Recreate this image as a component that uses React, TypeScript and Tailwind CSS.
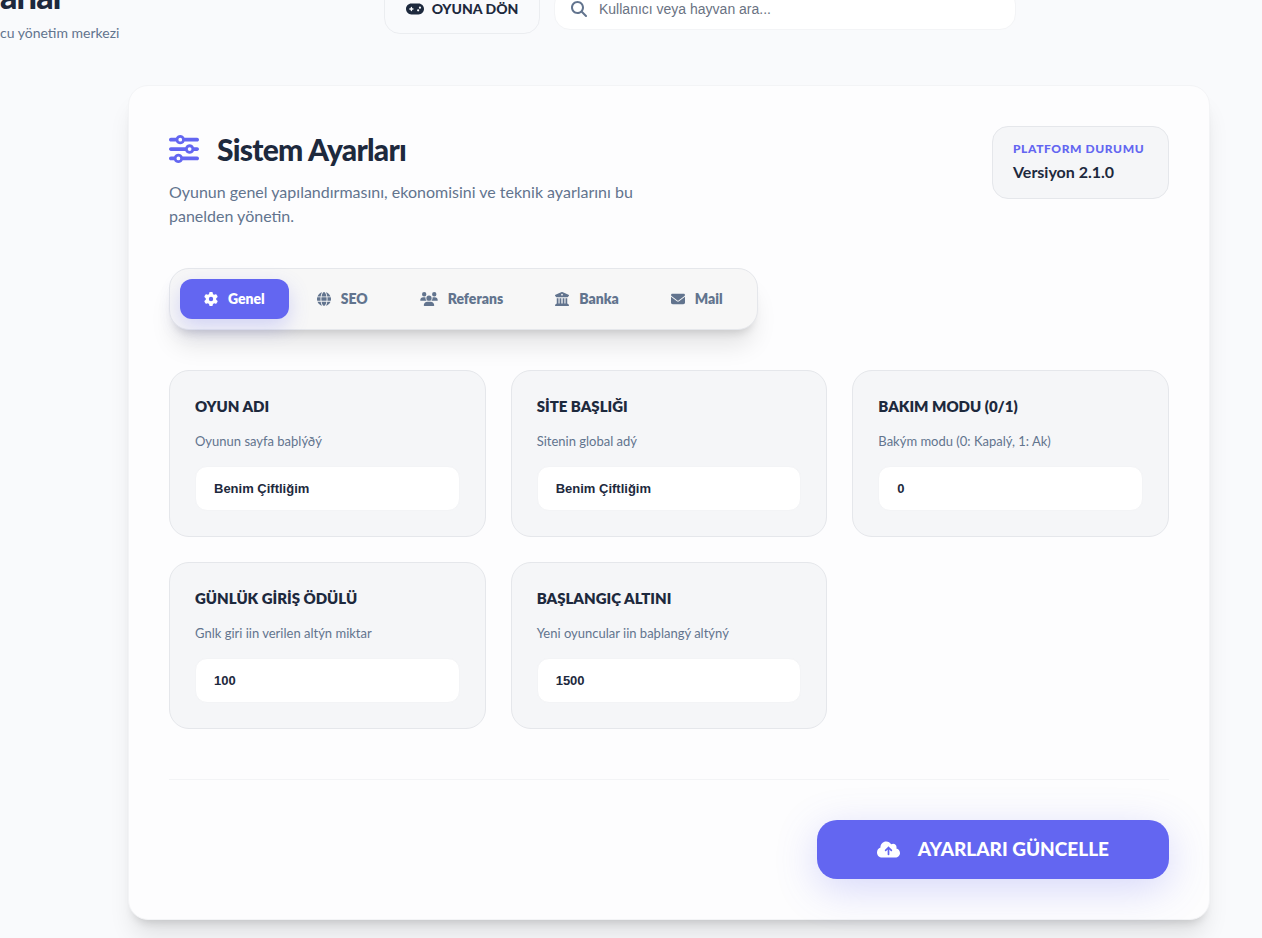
import { useState } from "react";
import type { FormEvent } from "react";
import {
  FaBuildingColumns,
  FaCloudArrowUp,
  FaEnvelope,
  FaGamepad,
  FaGear,
  FaGlobe,
  FaMagnifyingGlass,
  FaSliders,
  FaUsers,
} from "react-icons/fa6";

const tabs = [
  { id: "genel", label: "Genel", icon: FaGear, iconClass: "h-3.5 w-3.5" },
  { id: "seo", label: "SEO", icon: FaGlobe, iconClass: "h-3.5 w-3.5" },
  { id: "referans", label: "Referans", icon: FaUsers, iconClass: "h-3.5 w-[18px]" },
  { id: "banka", label: "Banka", icon: FaBuildingColumns, iconClass: "h-3.5 w-3.5" },
  { id: "mail", label: "Mail", icon: FaEnvelope, iconClass: "h-3.5 w-3.5" },
];

const settings = [
  { id: "game_name", label: "OYUN ADI", help: "Oyunun sayfa baþlýðý", value: "Benim Çiftliğim" },
  { id: "site_title", label: "SİTE BAŞLIĞI", help: "Sitenin global adý", value: "Benim Çiftliğim" },
  { id: "maintenance", label: "BAKIM MODU (0/1)", help: "Bakým modu (0: Kapalý, 1: Ak)", value: "0" },
  { id: "daily_reward", label: "GÜNLÜK GİRİŞ ÖDÜLÜ", help: "Gnlk giri iin verilen altýn miktar", value: "100" },
  { id: "start_gold", label: "BAŞLANGIÇ ALTINI", help: "Yeni oyuncular iin baþlangý altýný", value: "1500" },
];

const Header = () => (
  <header className="-mt-7 flex items-center">
    <div className="w-[384px] shrink-0">
      <p className="text-[34px] font-black leading-[48px] tracking-tight">arlar</p>
      <p className="text-sm leading-[26px] text-slate-500">cu yönetim merkezi</p>
    </div>
    <a
      href="#oyun"
      className="flex h-[50px] w-[156px] shrink-0 items-center justify-center gap-2 rounded-2xl border border-gray-200/70 text-sm font-black"
    >
      <FaGamepad size={18} />
      OYUNA DÖN
    </a>
    <div className="relative ml-3.5 mr-[246px] flex-1">
      <FaMagnifyingGlass size={16} className="absolute left-[17px] top-[13px] text-slate-500" />
      <input
        type="search"
        aria-label="Kullanıcı veya hayvan ara"
        placeholder="Kullanıcı veya hayvan ara..."
        className="h-[42px] w-full rounded-2xl border border-gray-100 bg-white pl-11 pr-4 font-['Liberation_Sans',sans-serif] text-sm outline-none placeholder:text-gray-500"
      />
    </div>
  </header>
);

const TabBar = ({ active, onChange }: { active: string; onChange: (id: string) => void }) => (
  <div
    role="tablist"
    className="mt-10 flex w-fit gap-1 rounded-[20px] border border-gray-200 bg-[#f7f7f7] p-2.5 shadow-[0_20px_25px_-5px_rgba(0,0,0,0.1),0_8px_10px_-6px_rgba(0,0,0,0.15)]"
  >
    {tabs.map(({ id, label, icon: Icon, iconClass }) => (
      <button
        key={id}
        type="button"
        role="tab"
        aria-selected={active === id}
        onClick={() => onChange(id)}
        className={`flex h-10 items-center gap-2.5 rounded-xl px-6 text-sm font-extrabold ${
          active === id
            ? "bg-[#6366f1] text-white shadow-[0_8px_20px_rgba(99,102,241,0.25)]"
            : "text-slate-500"
        }`}
      >
        <Icon className={iconClass} />
        {label}
      </button>
    ))}
  </div>
);

const App = () => {
  const [activeTab, setActiveTab] = useState("genel");

  const handleSubmit = (e: FormEvent) => {
    e.preventDefault();
  };

  return (
    <div className="min-h-screen overflow-hidden bg-[#f9fafc] pb-[18px] font-['Lato',sans-serif] text-slate-800">
      <Header />

      <main className="ml-32 mr-[52px] mt-[39px] rounded-[20px] border border-gray-100 bg-[#fdfdfe] p-10 shadow-[0_20px_25px_-5px_rgba(0,0,0,0.1),0_8px_10px_-6px_rgba(0,0,0,0.15)]">
        <div className="flex items-start justify-between">
          <div>
            <h1 className="flex items-center gap-[18px] text-[30px] font-black leading-[46px] tracking-tight">
              <FaSliders size={30} className="text-[#6366f1]" />
              Sistem Ayarları
            </h1>
            <p className="mt-2 max-w-[500px] text-base leading-6 text-slate-500">
              Oyunun genel yapılandırmasını, ekonomisini ve teknik ayarlarını bu panelden yönetin.
            </p>
          </div>
          <div className="min-w-[177px] rounded-2xl border border-gray-200 bg-[#f5f6f8] px-5 pb-3.5 pt-3">
            <p className="text-xs font-black leading-5 tracking-wider text-[#6366f1]">PLATFORM DURUMU</p>
            <p className="text-base font-bold leading-[25px]">Versiyon 2.1.0</p>
          </div>
        </div>

        <TabBar active={activeTab} onChange={setActiveTab} />

        <form onSubmit={handleSubmit}>
          <div className="mt-10 grid grid-cols-3 gap-[25px]">
            {settings.map((item) => (
              <div key={item.id} className="rounded-[20px] border border-gray-200 bg-[#f5f6f8] p-[25px]">
                <label htmlFor={item.id} className="block text-[15px] font-extrabold leading-5">
                  {item.label}
                </label>
                <p className="mt-4 text-[13px] leading-[18px] text-slate-500">{item.help}</p>
                <input
                  id={item.id}
                  type="text"
                  defaultValue={item.value}
                  className="mt-4 block h-[45px] w-full rounded-xl border border-gray-100 bg-white px-[18px] font-['Liberation_Sans',sans-serif] text-[13px] font-bold outline-none"
                />
              </div>
            ))}
          </div>

          {/* Save */}
          <div className="mt-[50px] flex justify-end border-t border-gray-100 pt-10">
            <button
              type="submit"
              className="flex h-[59px] items-center gap-[18px] rounded-[20px] bg-[#6366f1] px-[60px] text-[19px] font-black text-white shadow-[0_10px_40px_rgba(99,102,241,0.25)]"
            >
              <FaCloudArrowUp size={23} />
              AYARLARI GÜNCELLE
            </button>
          </div>
        </form>
      </main>
    </div>
  );
};

export default App;
